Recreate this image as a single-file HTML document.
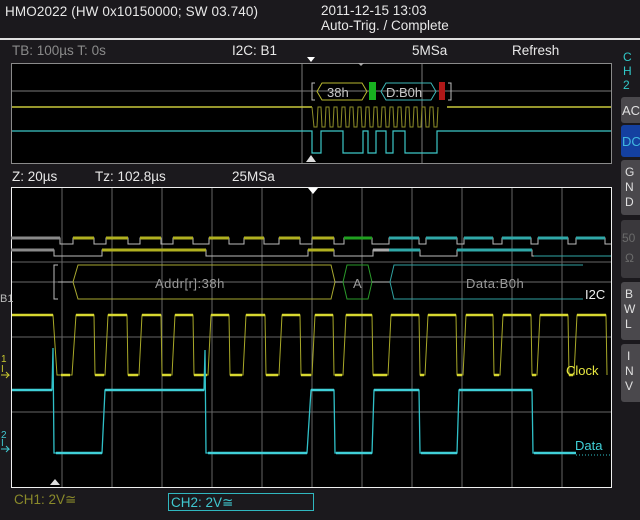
<!DOCTYPE html>
<html><head><meta charset="utf-8"><style>
html,body{margin:0;padding:0;background:#1b191d;width:640px;height:520px;overflow:hidden}
svg{display:block}
text{font-family:"Liberation Sans","DejaVu Sans",sans-serif}
</style></head><body>
<svg width="640" height="520" viewBox="0 0 640 520" xmlns="http://www.w3.org/2000/svg">
<rect width="640" height="520" fill="#1b191d"/>
<!-- header -->
<text x="5" y="16" font-size="13.5" fill="#e8e8e8" textLength="253">HMO2022 (HW 0x10150000; SW 03.740)</text>
<text x="321" y="15" font-size="13.5" fill="#e8e8e8">2011-12-15 13:03</text>
<text x="321" y="30" font-size="13.5" fill="#e8e8e8">Auto-Trig. / Complete</text>
<rect x="0" y="38" width="640" height="2" fill="#e0e0e0"/>
<text x="12" y="55" font-size="13.5" fill="#8a8a8a">TB: 100µs   T: 0s</text>
<text x="232" y="55" font-size="13.5" fill="#e8e8e8">I2C: B1</text>
<text x="412" y="55" font-size="13.5" fill="#e8e8e8">5MSa</text>
<text x="512" y="55" font-size="13.5" fill="#e8e8e8">Refresh</text>

<!-- overview -->
<rect x="11.5" y="63.5" width="600" height="100" fill="#000" stroke="#8a8a8a"/>
<line x1="302" y1="64" x2="302" y2="163" stroke="#7a7a7a"/>
<line x1="422" y1="64" x2="422" y2="163" stroke="#7a7a7a"/>
<line x1="12" y1="91" x2="611" y2="91" stroke="#7a7a7a"/>
<polygon points="307,57 315,57 311,62" fill="#fff"/>
<polygon points="358,63 364,63 361,66" fill="#aaa"/>
<polygon points="306,162 316,162 311,155" fill="#ddd"/>
<line x1="12" y1="107" x2="312" y2="107" stroke="#c8c83a" stroke-width="1.5"/>
<line x1="447" y1="107" x2="611" y2="107" stroke="#c8c83a" stroke-width="1.5"/>
<path d="M312,107 l2,20 h3 l1,-20 h3 l1,20 h3 l1,-20 h3 l1,20 h3 l1,-20 h3 l1,20 h3 l1,-20 h3 l1,20 h3 l1,-20 h3 l1,20 h3 l1,-20 h3 l1,20 h3 l1,-20 h3 l1,20 h3 l1,-20 h3 l1,20 h3 l1,-20 h3 l1,20 h3 l1,-20 h3 l1,20 h3 l1,-20 h3 l1,20 h3 l1,-20 h3 l1,20 h3 l1,-20 h3 l1,20 h3 l1,-20 h3 l1,20 h3 l1,-20 h3 l1,20 h3 l1,-20" fill="none" stroke="#8f8f28" stroke-width="1"/>
<path d="M12,131 H312 V153 H321 V131 H343 V153 H363 V131 H368 V153 H376 V131 H386 V153 H393 V131 H405 V153 H437 V131 H611" fill="none" stroke="#3cc8c8" stroke-width="1.2"/>
<path d="M315,83 h-3 v17 h3" fill="none" stroke="#bbb"/>
<path d="M322,83 h40 l5,8.5 l-5,8.5 h-40 l-5,-8.5 z" fill="none" stroke="#b8b830"/>
<text x="327" y="97" font-size="13" fill="#c8c8c8">38h</text>
<rect x="369" y="82" width="7" height="18" fill="#18b020"/>
<path d="M386,83 h45 l5,8.5 l-5,8.5 h-45 l-5,-8.5 z" fill="none" stroke="#3cb8b8"/>
<text x="386" y="97" font-size="13" fill="#c8c8c8">D:B0h</text>
<rect x="439" y="82" width="6" height="18" fill="#b01818"/>
<path d="M448,83 h3 v17 h-3" fill="none" stroke="#bbb"/>

<text x="12" y="181" font-size="13.5" fill="#e8e8e8">Z: 20µs</text>
<text x="95" y="181" font-size="13.5" fill="#e8e8e8">Tz: 102.8µs</text>
<text x="232" y="181" font-size="13.5" fill="#e8e8e8">25MSa</text>

<!-- main -->
<rect x="11.5" y="187.5" width="600" height="300" fill="#000" stroke="#f0f0f0"/>
<g stroke="#666" stroke-width="1">
<line x1="62" y1="188" x2="62" y2="487"/><line x1="112" y1="188" x2="112" y2="487"/>
<line x1="162" y1="188" x2="162" y2="487"/><line x1="212" y1="188" x2="212" y2="487"/>
<line x1="262" y1="188" x2="262" y2="487"/><line x1="312" y1="188" x2="312" y2="487"/>
<line x1="362" y1="188" x2="362" y2="487"/><line x1="412" y1="188" x2="412" y2="487"/>
<line x1="462" y1="188" x2="462" y2="487"/><line x1="512" y1="188" x2="512" y2="487"/>
<line x1="562" y1="188" x2="562" y2="487"/>
<line x1="12" y1="262" x2="611" y2="262"/><line x1="12" y1="337" x2="611" y2="337"/>
<line x1="12" y1="412" x2="611" y2="412"/>
<line x1="12" y1="282" x2="611" y2="282" stroke="#6a6a6a"/>
</g>
<polygon points="308,188 318,188 313,194" fill="#fff"/>
<polygon points="50,485 60,485 55,479" fill="#ddd"/>
<!-- SCL digital -->
<path d="M11,238 H60 V244 H73 V238 H94 V244 H106 V238 H128 V244 H140 V238 H161 V244 H173 V238 H193 V244 H209 V238 H229 V244 H244 V238 H264 V244 H279 V238 H300 V244 H312 V238 H334 V244 H344 V238 H372 V244 H389 V238 H419 V244 H426 V238 H457 V244 H464 V238 H493 V244 H502 V238 H531 V244 H538 V238 H568 V244 H576 V238 H605 V244 H611" fill="none" stroke="#bbbbbb" stroke-width="1"/>
<path d="M11,238 H60" stroke="#8a8a8a" stroke-width="3"/>
<g stroke="#b0b020" stroke-width="3">
<path d="M73,238H94 M106,238H128 M140,238H161 M173,238H193 M209,238H229 M244,238H264 M279,238H300 M312,238H334"/>
</g>
<path d="M344,238H372" stroke="#20a020" stroke-width="3"/>
<g stroke="#30a8a8" stroke-width="3">
<path d="M389,238H419 M426,238H457 M464,238H493 M502,238H531 M538,238H568 M576,238H605"/>
</g>
<!-- SDA digital -->
<path d="M11,250 H54 V256 H102 V250 H206 V256 H308 V250 H334 V256 H373 V250 H420 V256 H457 V250 H532 V256 H611" fill="none" stroke="#bbbbbb" stroke-width="1"/>
<path d="M11,250H54" stroke="#8a8a8a" stroke-width="3"/>
<path d="M102,250H206 M308,250H334" stroke="#b0b020" stroke-width="3"/>
<path d="M373,250H389" stroke="#aaa" stroke-width="3"/>
<path d="M389,250H420 M457,250H532" stroke="#30a8a8" stroke-width="3"/>
<path d="M534,256H611" stroke="#30a8a8" stroke-width="1"/>
<!-- decode -->
<path d="M58,265 h-4 v34 h4" fill="none" stroke="#bbb"/>
<line x1="58" y1="282" x2="73" y2="282" stroke="#bbb"/>
<path d="M78,265 H331 L335,282 L331,299 H78 L73,282 Z" fill="none" stroke="#a8a830"/>
<text x="155" y="288" font-size="13" fill="#9a9a9a" letter-spacing="0.5">Addr[r]:38h</text>
<line x1="335" y1="282" x2="343" y2="282" stroke="#bbb"/>
<path d="M347,265 H368 L372,282 L368,299 H347 L343,282 Z" fill="none" stroke="#2a9a2a"/>
<text x="353" y="288" font-size="13" fill="#9a9a9a">A</text>
<line x1="372" y1="282" x2="390" y2="282" stroke="#bbb"/>
<path d="M583,265 H394 L390,282 L394,299 H583" fill="none" stroke="#30a0a0"/>
<text x="466" y="288" font-size="13" fill="#9a9a9a" letter-spacing="0.5">Data:B0h</text>
<text x="585" y="299" font-size="13" fill="#f0f0f0">I2C</text>
<text x="0" y="302" font-size="11" fill="#bbb">B1</text>
<!-- clock -->
<path d="M12,315 H53 L57,375 H72 L76,315 H94 L95,375 H105 L108,315 H127 L128,375 H139 L142,315 H161 L162,375 H172 L175,315 H193 L194,375 H208 L211,315 H229 L230,375 H243 L246,315 H265 L266,375 H279 L282,315 H300 L301,375 H312 L315,315 H333 L334,375 H343 L346,315 H372 L373,375 H388 L391,315 H419 L420,375 H425 L428,315 H456 L457,375 H463 L466,315 H493 L494,375 H500 L503,315 H531 L532,375 H537 L540,315 H568 L569,375 H574 L577,315 H606 L607,375" fill="none" stroke="#a8a828" stroke-width="1"/>
<g stroke="#d8d830" stroke-width="2.5">
<path d="M12,315H53 M76,315H94 M108,315H127 M142,315H161 M175,315H193 M211,315H229 M246,315H265 M282,315H300 M315,315H333 M346,315H372 M391,315H419 M428,315H456 M466,315H493 M503,315H531 M540,315H568 M577,315H606"/>
<path d="M61,375H70 M95,375H104 M128,375H138 M162,375H171 M194,375H207 M230,375H242 M266,375H278 M301,375H311 M335,375H342 M373,375H387 M420,375H424 M457,375H462 M494,375H499 M532,375H536 M569,375H573"/>
</g>
<text x="566" y="375" font-size="13" fill="#e8e840">Clock</text>
<!-- data -->
<path d="M12,390 H52 L53,348 L54,453 H102 L105,390 H204 L205,350 L206,453 H307 L311,390 H334 L335,453 H372 L374,390 H419 L420,453 H457 L459,390 H532 L533,453 H576" fill="none" stroke="#30c0c8" stroke-width="1.3"/>
<path d="M12,390H52 M105,390H204 M311,390H334 M374,390H419 M459,390H532 M56,453H102 M208,453H307 M336,453H372 M421,453H457 M534,453H576" stroke="#40d0d8" stroke-width="2.5"/>
<line x1="576" y1="455" x2="611" y2="455" stroke="#30c0c8" stroke-dasharray="1 2"/>
<text x="575" y="450" font-size="13" fill="#40d0d8">Data</text>
<!-- ch markers -->
<text x="1" y="362" font-size="10" fill="#c8c830">1</text>
<text x="1" y="372" font-size="10" fill="#c8c830">I</text>
<path d="M1,375 h8 l-3,-3 m3,3 l-3,3" stroke="#c8c830" fill="none"/>
<text x="1" y="438" font-size="10" fill="#40c8d0">2</text>
<text x="1" y="446" font-size="10" fill="#40c8d0">I</text>
<path d="M1,449 h8 l-3,-3 m3,3 l-3,3" stroke="#40c8d0" fill="none"/>

<!-- bottom -->
<text x="14" y="504" font-size="13.5" fill="#8a8a2a">CH1: 2V≅</text>
<rect x="168.5" y="493.5" width="145" height="17" fill="none" stroke="#30b8c0"/>
<text x="171" y="507" font-size="13.5" fill="#40c8d0">CH2: 2V≅</text>

<!-- right panel -->
<text x="623" y="61" font-size="12" fill="#30c8c8">C</text>
<text x="623" y="75" font-size="12" fill="#30c8c8">H</text>
<text x="623" y="89" font-size="12" fill="#30c8c8">2</text>
<rect x="621" y="97" width="22" height="26" rx="3" fill="#4a484c"/>
<text x="622" y="115" font-size="13" fill="#e0e0e0">AC</text>
<rect x="621" y="125" width="22" height="32" rx="3" fill="#1440a0"/>
<text x="622" y="146" font-size="13" fill="#40b8e0">DC</text>
<rect x="621" y="160" width="22" height="55" rx="3" fill="#4a484c"/>
<text x="625" y="176" font-size="12" fill="#e0e0e0">G</text>
<text x="625" y="191" font-size="12" fill="#e0e0e0">N</text>
<text x="625" y="206" font-size="12" fill="#e0e0e0">D</text>
<rect x="621" y="220" width="22" height="58" rx="3" fill="#3a383c"/>
<text x="622" y="242" font-size="12" fill="#6a6a6a">50</text>
<text x="625" y="262" font-size="12" fill="#6a6a6a">Ω</text>
<rect x="621" y="282" width="22" height="58" rx="3" fill="#4a484c"/>
<text x="625" y="298" font-size="12" fill="#e0e0e0">B</text>
<text x="624" y="313" font-size="12" fill="#e0e0e0">W</text>
<text x="625" y="328" font-size="12" fill="#e0e0e0">L</text>
<rect x="621" y="344" width="22" height="58" rx="3" fill="#4a484c"/>
<text x="627" y="360" font-size="12" fill="#e0e0e0">I</text>
<text x="625" y="375" font-size="12" fill="#e0e0e0">N</text>
<text x="625" y="390" font-size="12" fill="#e0e0e0">V</text>
</svg>
</body></html>
